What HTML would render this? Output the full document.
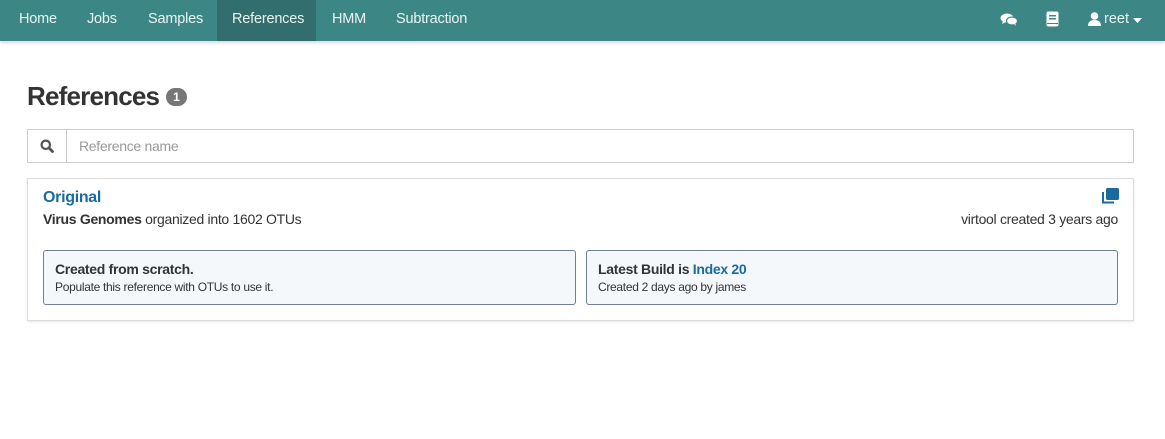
<!DOCTYPE html>
<html><head><style>
*{box-sizing:border-box;margin:0;padding:0}
body{width:1165px;height:439px;background:#fff;font-family:"Liberation Sans",sans-serif;color:#333;overflow:hidden;position:relative}
.nav{position:absolute;left:0;top:0;width:1165px;height:41px;background:#3c8786;box-shadow:0 2px 3px rgba(0,0,0,.15)}
.nav a{position:absolute;top:0;height:41px;line-height:39px;color:#e8f4f3;font-size:14.5px;letter-spacing:-.2px}
.nav .act{background:#316e6d}
.t{position:absolute;white-space:nowrap;letter-spacing:-.3px}
</style></head><body>
<div class="nav">
<a style="left:19px">Home</a>
<a style="left:87px">Jobs</a>
<a style="left:148px">Samples</a>
<a class="act" style="left:217px;width:99px;padding-left:15px">References</a>
<a style="left:332px">HMM</a>
<a style="left:396px">Subtraction</a>
<svg style="position:absolute;left:1000px;top:12px" width="18" height="15" viewBox="0 0 18 15"><ellipse cx="7" cy="6" rx="6.5" ry="4.5" fill="#fff"/><path d="M3 9 L2 12 L6 10Z" fill="#fff"/><ellipse cx="12" cy="9" rx="5.5" ry="4" fill="#fff" stroke="#3c8786" stroke-width="1.2"/><path d="M14 12 L16 14 L15 11Z" fill="#fff"/></svg>
<svg style="position:absolute;left:1046px;top:11px" width="13" height="16" viewBox="0 0 13 16"><rect x="0.5" y="0.5" width="12" height="15" rx="2" fill="#fff"/><rect x="3" y="4" width="7" height="1.5" fill="#3c8786"/><rect x="3" y="7" width="7" height="1.5" fill="#3c8786"/><rect x="1" y="12" width="11" height="1" fill="#3c8786"/></svg>
<svg style="position:absolute;left:1088px;top:12px" width="13" height="14" viewBox="0 0 13 14"><circle cx="6.5" cy="4" r="3.8" fill="#fff"/><path d="M0 14 Q0 8 6.5 8 Q13 8 13 14Z" fill="#fff"/></svg>
<span style="position:absolute;left:1104px;top:11px;line-height:17px;color:#e8f4f3;font-size:14.5px">reet</span>
<svg style="position:absolute;left:1133px;top:18px" width="9" height="5"><path d="M0 0H9L4.5 5Z" fill="#fff"/></svg>
</div>
<div class="t" style="left:27px;top:81px;font-size:26px;font-weight:bold;color:#333;letter-spacing:-.8px">References</div>
<div style="position:absolute;left:166px;top:88px;width:21px;height:18px;border-radius:9px;background:#777;color:#fff;font-size:12px;font-weight:bold;text-align:center;line-height:18px">1</div>
<div style="position:absolute;left:27px;top:129px;width:1107px;height:34px;border:1px solid #ccc"></div>
<div style="position:absolute;left:66px;top:130px;width:1px;height:32px;background:#ccc"></div>
<svg style="position:absolute;left:40px;top:139px" width="14" height="14" viewBox="0 0 14 14"><circle cx="5.8" cy="5.8" r="4.2" fill="none" stroke="#555" stroke-width="2.2"/><path d="M9 9L12.5 12.5" stroke="#555" stroke-width="2.8" stroke-linecap="round"/></svg>
<div class="t" style="left:79px;top:138px;font-size:14px;color:#999">Reference name</div>
<div style="position:absolute;left:27px;top:178px;width:1107px;height:143px;border:1px solid #ddd;box-shadow:0 1px 2px rgba(0,0,0,.1)"></div>
<div class="t" style="left:43px;top:189px;font-size:16px;font-weight:bold;color:#1a6aa0">Original</div>
<svg style="position:absolute;left:1101px;top:188px" width="18" height="17" viewBox="0 0 18 17"><rect x="5" y="0" width="13" height="12" rx="1.5" fill="#1a6aa0"/><path d="M3 4V13.5H13V15.5H1V4Z" fill="#1a6aa0"/></svg>
<div class="t" style="left:43px;top:211px;font-size:14px;color:#333"><b>Virus Genomes</b> organized into 1602 OTUs</div>
<div class="t" style="right:47px;top:211px;font-size:14px;color:#333">virtool created 3 years ago</div>
<div style="position:absolute;left:43px;top:250px;width:533px;height:55px;border:1px solid #6f7f96;border-radius:3px;background:#f4f8fb"></div>
<div class="t" style="left:55px;top:261px;font-size:14px;font-weight:bold;color:#333">Created from scratch.</div>
<div class="t" style="left:55px;top:280px;font-size:12px;color:#333">Populate this reference with OTUs to use it.</div>
<div style="position:absolute;left:586px;top:250px;width:532px;height:55px;border:1px solid #6f7f96;border-radius:3px;background:#f4f8fb"></div>
<div class="t" style="left:598px;top:261px;font-size:14px;font-weight:bold;color:#333">Latest Build is <span style="color:#1a6aa0">Index 20</span></div>
<div class="t" style="left:598px;top:280px;font-size:12px;color:#333">Created 2 days ago by james</div>
</body></html>
